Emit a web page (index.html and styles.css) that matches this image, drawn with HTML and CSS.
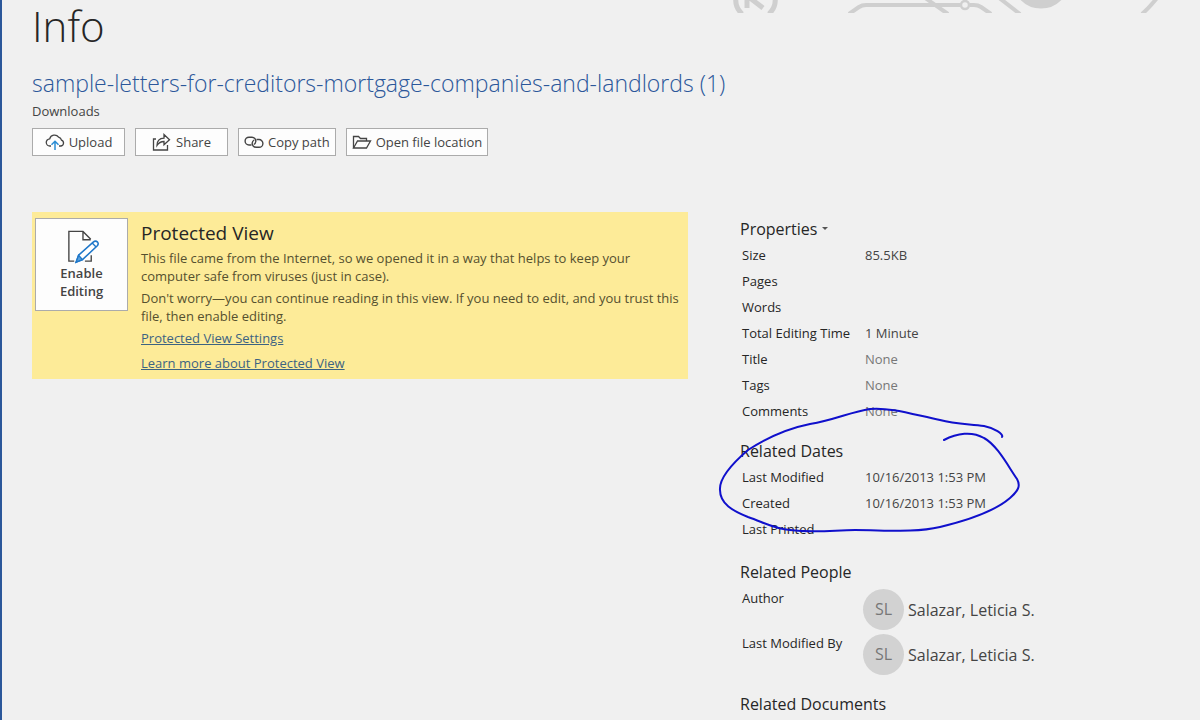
FILE: index.html
```html
<!DOCTYPE html>
<html lang="en">
<head>
    <meta charset="UTF-8">
    <meta name="viewport" content="width=device-width, initial-scale=1.0">
    <title>Info</title>
    <link rel="stylesheet" href="styles.css">
</head>
<body>
    <svg class="circuit" width="480" height="13" viewBox="0 0 480 13" fill="none" stroke="#cfcfcf" stroke-width="4" aria-hidden="true">
        <path d="M17 -6Q13 5 22 14M54 -6Q58 5 49 14" stroke-width="5"/>
        <path d="M27 -4V8M30 -2L43 8" stroke-width="5"/>
        <path d="M129 14L139 7Q142 5 146 5H240M250 5H254Q258 5 261 7L271 14"/>
        <path d="M204 -3Q215 5 228 14M278 -3L300 14M422 14Q429 8 437 -2"/>
        <circle cx="245" cy="5" r="4" stroke-width="2.5"/>
        <circle cx="321" cy="-20" r="24" stroke-width="9"/>
    </svg>

    <header class="page-header">
        <h1>Info</h1>
        <h2 class="file-name">sample-letters-for-creditors-mortgage-companies-and-landlords (1)</h2>
        <p class="file-folder">Downloads</p>
        <div class="actions">
            <button type="button" class="action">
                <svg width="20" height="18" viewBox="0 0 20 18" fill="none" stroke="#444" stroke-width="1.3">
                    <path d="M6 13H5A3.6 3.6 0 0 1 4.7 5.8A5 5 0 0 1 13.6 4.2A4 4 0 0 1 16.5 7.2A3 3 0 0 1 16 13H14"/>
                    <path d="M10 17V8.5M6.5 11.7L10 8.2L13.5 11.7" stroke="#2a8dd4" stroke-width="1.5"/>
                </svg>
                Upload
            </button>
            <button type="button" class="action">
                <svg width="20" height="18" viewBox="0 0 20 18" fill="none" stroke="#444" stroke-width="1.3">
                    <path d="M4 6H1.5V17H15.500V12"/>
                    <path d="M5 12.500Q5 5.500 12 5.200V1.500L17.500 6.700L12 11.700V8.500Q7.500 8.500 5 12.500Z"/>
                </svg>
                Share
            </button>
            <button type="button" class="action">
                <svg width="20" height="18" viewBox="0 0 20 18" fill="none" stroke="#444" stroke-width="1.4">
                    <path d="M7.500 12H5A3.900 3.900 0 0 1 5 4.200H8A3.900 3.900 0 0 1 11.800 8.500A3.900 3.900 0 0 1 9.800 11.500"/>
                    <path d="M12.500 6.500H15A3.900 3.900 0 0 1 15 14.300H12A3.900 3.900 0 0 1 8.200 10A3.900 3.900 0 0 1 10.200 7"/>
                </svg>
                Copy path
            </button>
            <button type="button" class="action">
                <svg width="20" height="18" viewBox="0 0 20 18" fill="none" stroke="#444" stroke-width="1.3">
                    <path d="M1.500 15V3.500H6.500L8.500 5.500H14.500V8"/>
                    <path d="M1.500 15L5.500 8H18.500L14.500 15Z"/>
                </svg>
                Open file location
            </button>
        </div>
    </header>

    <main class="content">
        <section class="protected-view">
            <button type="button" class="enable-button">
                <svg width="34" height="36" viewBox="0 0 34 36" fill="none" stroke="#444" stroke-width="1.4">
                    <path d="M9 33H3.500V2.500H18L26 10.500M18 2.500V11H26M20 33H26.500V27"/>
                    <path d="M11 34L13.500 27L28.500 13.500Q31 11.500 33 13.500Q34.500 15.500 32.500 17.500L17.500 31.500Z" fill="#fff" stroke="#1f77c9" stroke-width="1.6"/>
                    <path d="M11 34L13.500 27L17.500 31.500Z" fill="#5aa2dd" stroke="#1f77c9"/>
                    <path d="M27.500 14.500L31.500 18.500" stroke="#1f77c9"/>
                </svg>
                Enable Editing
            </button>
            <div class="message">
                <h3>Protected View</h3>
                <p>This file came from the Internet, so we opened it in a way that helps to keep your computer safe from viruses (just in case).</p>
                <p>Don't worry—you can continue reading in this view. If you need to edit, and you trust this file, then enable editing.</p>
                <a href="#">Protected View Settings</a>
                <a href="#">Learn more about Protected View</a>
            </div>
        </section>

        <aside class="details">
            <section>
                <button type="button" class="properties-button">
                    Properties
                    <svg width="6" height="4" viewBox="0 0 6 4"><path d="M0 0H6L3 3Z" fill="#555"/></svg>
                </button>
                <table>
                    <tr><th scope="row">Size</th><td>85.5KB</td></tr>
                    <tr><th scope="row">Pages</th><td></td></tr>
                    <tr><th scope="row">Words</th><td></td></tr>
                    <tr><th scope="row">Total Editing Time</th><td>1 Minute</td></tr>
                    <tr><th scope="row">Title</th><td class="empty">None</td></tr>
                    <tr><th scope="row">Tags</th><td class="empty">None</td></tr>
                    <tr><th scope="row">Comments</th><td class="empty">None</td></tr>
                </table>
            </section>

            <section class="dates">
                <h3>Related Dates</h3>
                <table>
                    <tr><th scope="row">Last Modified</th><td>10/16/2013 1:53 PM</td></tr>
                    <tr><th scope="row">Created</th><td>10/16/2013 1:53 PM</td></tr>
                    <tr><th scope="row">Last Printed</th><td></td></tr>
                </table>
                <!-- pen circle around the dates -->
                <svg class="ink" width="310" height="130" viewBox="715 405 310 130" fill="none" stroke="#1010cc" stroke-width="2" stroke-linecap="round" aria-hidden="true">
                    <path d="M1002 437C1004 434 994 428 984 426C970 424 955 424 940 420C915 415 890 407 870 409C850 412 835 420 810 424C785 429 765 439 748 450C734 462 719 478 720 490C720 504 733 511 748 517C765 523 775 529 790 530C815 533 835 530 855 530C885 530 915 533 940 527C965 521 995 511 1010 498C1018 491 1021 486 1017 479C1008 466 997 445 984 438C972 431 957 433 944 440"/>
                </svg>
            </section>

            <section class="people">
                <h3>Related People</h3>
                <table>
                    <tr>
                        <th scope="row">Author</th>
                        <td><span class="person"><span class="avatar">SL</span>Salazar, Leticia S.</span></td>
                    </tr>
                    <tr>
                        <th scope="row">Last Modified By</th>
                        <td><span class="person"><span class="avatar">SL</span>Salazar, Leticia S.</span></td>
                    </tr>
                </table>
            </section>

            <section>
                <h3>Related Documents</h3>
            </section>
        </aside>
    </main>
</body>
</html>
```
FILE: styles.css
```css
* {
    box-sizing: border-box;
}

body {
    position: relative;
    margin: 0;
    min-height: 100vh;
    padding-left: 30px;
    border-left: 2px solid #2b579a;
    background-color: #f0f0f0;
    color: #444;
    font-family: "Open Sans", "Noto Sans", sans-serif;
    font-size: 13px;
    line-height: 18px;
}

h1, h2, h3, p {
    margin: 0;
    font-weight: normal;
}

h3 {
    color: #262626;
    font-size: 16px;
    line-height: 24px;
}

button {
    border: 1px solid #ababab;
    background-color: #fdfdfd;
    color: #444;
    font: inherit;
    cursor: pointer;
}

.circuit {
    position: absolute;
    top: 0;
    right: 0;
}

/* Title and file actions */
.page-header h1 {
    color: #262626;
    font-size: 42px;
    font-weight: 300;
    line-height: 52px;
}

.file-name {
    margin-top: 14px;
    color: #2b579a;
    font-size: 23px;
    font-weight: 300;
    line-height: 34px;
}

.file-folder {
    margin-top: 2px;
}

.actions {
    display: flex;
    flex-wrap: wrap;
    gap: 10px;
    margin-top: 8px;
}

.action {
    display: flex;
    align-items: center;
    justify-content: center;
    gap: 4px;
    min-width: 93px;
    height: 28px;
    padding: 0 5px;
}

/* Two columns */
.content {
    display: grid;
    grid-template-columns: 656fr 460fr;
    align-items: start;
    gap: 52px;
    margin-top: 56px;
}

.protected-view {
    display: flex;
    align-items: flex-start;
    gap: 13px;
    padding: 6px 3px 0 3px;
    background-color: #fdeb98;
}

.enable-button {
    display: flex;
    flex-direction: column;
    flex-shrink: 0;
    align-items: center;
    width: 93px;
    height: 93px;
    padding: 10px 16px;
    font-weight: 600;
}

.message {
    display: flex;
    flex-direction: column;
    align-items: flex-start;
    color: #55502f;
}

.message h3 {
    font-size: 19px;
    line-height: 31px;
}

.message p {
    margin-bottom: 4px;
}

.message a {
    margin-bottom: 7px;
    color: #3c6382;
}

/* Properties pane */
.details {
    padding-top: 5px;
}

.properties-button {
    display: flex;
    align-items: center;
    gap: 5px;
    padding: 0;
    border: 0;
    background: none;
    color: #262626;
    font-size: 16px;
    line-height: 24px;
}

table {
    border-collapse: collapse;
    margin-top: 1px;
}

th, td {
    height: 26px;
    padding: 4px 0;
    text-align: left;
    vertical-align: top;
}

th {
    width: 125px;
    padding-left: 2px;
    color: #262626;
    font-weight: normal;
}

.empty {
    color: #777;
}

.dates {
    position: relative;
    margin-top: 15px;
}

.ink {
    position: absolute;
    top: -34px;
    left: -25px;
}

.people {
    margin: 18px 0 17px;
}

.people td {
    height: 45px;
    padding: 4px 0 0;
}

.person {
    display: flex;
    align-items: center;
    gap: 4px;
    margin-left: -2px;
    font-size: 16px;
}

.avatar {
    width: 41px;
    height: 41px;
    border-radius: 50%;
    background-color: #d2d2d2;
    color: #777;
    line-height: 41px;
    text-align: center;
}
```
